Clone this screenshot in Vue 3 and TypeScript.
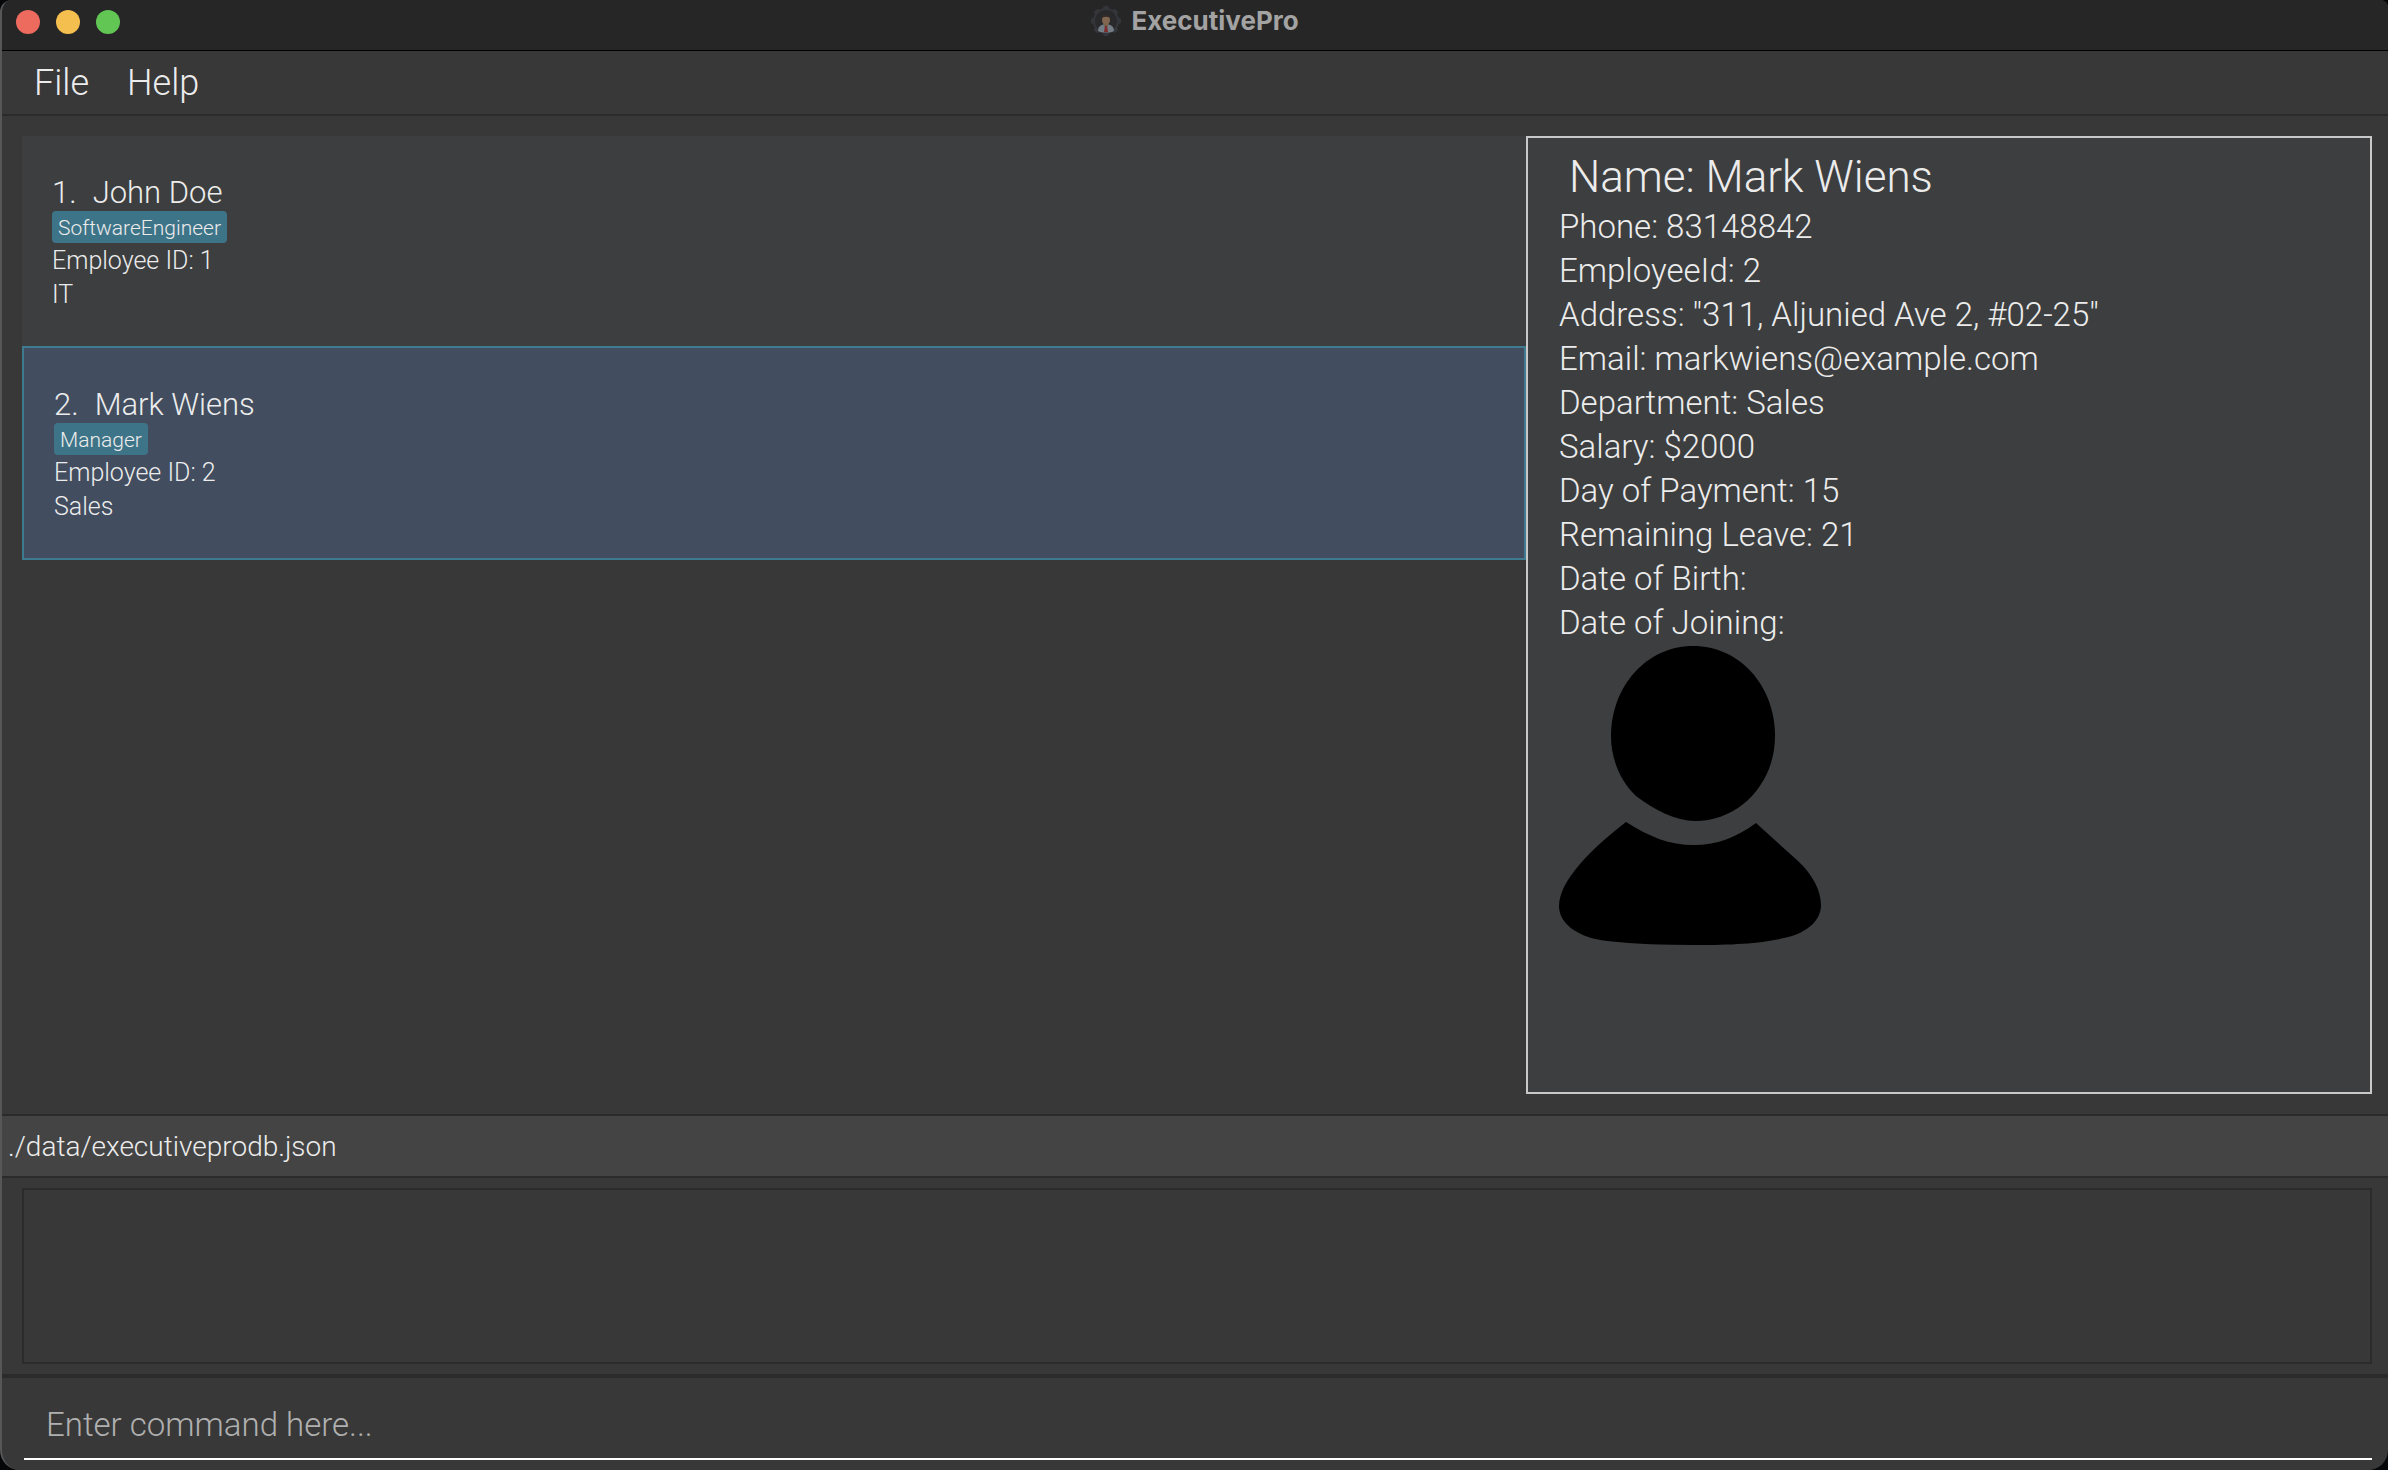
<script setup lang="ts">
import { ref } from 'vue'

interface Employee {
  id: number
  name: string
  tag: string
  department: string
}

const employees: Employee[] = [
  { id: 1, name: 'John Doe', tag: 'SoftwareEngineer', department: 'IT' },
  { id: 2, name: 'Mark Wiens', tag: 'Manager', department: 'Sales' },
]

const details: string[] = [
  'Phone: 83148842',
  'EmployeeId: 2',
  'Address: "311, Aljunied Ave 2, #02-25"',
  'Email: markwiens@example.com',
  'Department: Sales',
  'Salary: $2000',
  'Day of Payment: 15',
  'Remaining Leave: 21',
  'Date of Birth:',
  'Date of Joining:',
]

const selectedId = ref(2)
const command = ref('')
const result = ref('')
const teeth = [0, 45, 90, 135, 180, 225, 270, 315]
</script>

<template>
  <div class="window">
    <header class="titlebar">
      <div class="lights">
        <button class="light close" type="button" aria-label="Close"></button>
        <button class="light minimise" type="button" aria-label="Minimise"></button>
        <button class="light zoom" type="button" aria-label="Zoom"></button>
      </div>
      <div class="title">
        <svg class="logo" viewBox="0 0 30 30" aria-hidden="true">
          <g fill="#35363b">
            <rect v-for="a in teeth" :key="a" x="12" y="0" width="6" height="6" rx="2" :transform="`rotate(${a} 15 15)`" />
            <circle cx="15" cy="15" r="13" />
          </g>
          <circle cx="15" cy="15" r="11" fill="#29292b" />
          <path d="M7 25c0-5 4-7 8-7s8 2 8 7c-4 2-12 2-16 0z" fill="#737d85" />
          <path d="M13 17h4v3l-2 2-2-2z" fill="#78604c" />
          <ellipse cx="15" cy="14" rx="4" ry="5" fill="#806650" />
          <path d="M10 13c-1-7 11-7 10 0-1-3-9-3-10 0z" fill="#30292a" />
          <path d="M14 20h2l1 6h-4z" fill="#7d2b2b" />
        </svg>
        <h1>ExecutivePro</h1>
      </div>
    </header>

    <nav class="menubar">
      <button type="button">File</button>
      <button type="button">Help</button>
    </nav>

    <main class="content">
      <ul class="list">
        <li
          v-for="e in employees"
          :key="e.id"
          class="card"
          :class="{ selected: e.id === selectedId }"
          @click="selectedId = e.id"
        >
          <h2><span>{{ e.id }}.</span><span>{{ e.name }}</span></h2>
          <span class="tag">{{ e.tag }}</span>
          <p>Employee ID: {{ e.id }}</p>
          <p>{{ e.department }}</p>
        </li>
      </ul>

      <section class="detail">
        <h2>Name: Mark Wiens</h2>
        <p v-for="d in details" :key="d">{{ d }}</p>
        <svg class="avatar" viewBox="0 0 262 300" role="img" aria-label="Profile picture">
          <path d="M134 1C181 1 216 41 216 91C216 139 180 176 136 176C117 176 95 165 77 151C62 137 52 115 52 91C52 41 88 1 134 1Z" />
          <path d="M67 177C91 192 110 200 135 200C159 200 178 192 197 178L239 216C254 230 262 246 262 260C262 276 248 286 233 291C208 298 180 300 135 300C105 300 77 299 48 296C20 293 0 279 0 261C0 249 7 235 21 219C33 205 49 191 67 177Z" />
        </svg>
      </section>
    </main>

    <p class="status">./data/executiveprodb.json</p>

    <div class="result">
      <textarea v-model="result" readonly aria-label="Command result"></textarea>
    </div>

    <form class="command" @submit.prevent>
      <input v-model="command" type="text" placeholder="Enter command here..." aria-label="Command" />
    </form>
  </div>
</template>

<style>
body {
  margin: 0;
  background: #060708;
}
</style>

<style scoped>
* {
  box-sizing: border-box;
}
.window {
  display: flex;
  flex-direction: column;
  min-height: 100vh;
  overflow: hidden;
  border-left: 2px solid #575757;
  border-radius: 12px 8px 20px 20px;
  background: #383838;
  color: #ececec;
  font-family: Roboto, "Liberation Sans", sans-serif;
  font-weight: 350;
}
h1,
h2,
p,
ul {
  margin: 0;
  padding: 0;
  font-weight: inherit;
}
button {
  padding: 0;
  border: 0;
  background: none;
  color: inherit;
  font: inherit;
}
.titlebar {
  display: grid;
  grid-template-columns: 1fr auto 1fr;
  align-items: start;
  height: 51px;
  border-bottom: 1px solid #000;
  background: #262626;
}
.lights {
  display: flex;
  gap: 16px;
  padding: 10px 14px;
}
.light {
  width: 24px;
  height: 24px;
  border-radius: 50%;
}
.close {
  background: #ed6a5f;
}
.minimise {
  background: #f5bf4f;
}
.zoom {
  background: #62c655;
}
.title {
  display: flex;
  align-items: center;
  gap: 10px;
  height: 41px;
}
.logo {
  width: 30px;
  height: 30px;
}
.title h1 {
  color: #a3a3a3;
  font-family: Inter, "Liberation Sans", sans-serif;
  font-size: 26px;
  font-weight: 700;
}
.menubar {
  display: flex;
  gap: 38px;
  padding: 2px 32px 0;
  border-bottom: 2px solid #2b2b2b;
  font-size: 36px;
  line-height: 61px;
}
.content {
  display: grid;
  grid-template-columns: minmax(0, 64fr) minmax(0, 36fr);
  flex: 1;
  padding: 20px 16px 20px 20px;
}
.list {
  list-style: none;
}
.card {
  display: flex;
  flex-direction: column;
  align-items: flex-start;
  padding: 38px 30px 34px;
  background: #3c3e3f;
  font-size: 25px;
  line-height: 34px;
}
.card.selected {
  border: 2px solid #3e7b91;
  background: #424d5f;
}
.card h2 {
  display: flex;
  gap: 16px;
  font-size: 31px;
  line-height: 37px;
}
.tag {
  margin-bottom: 1px;
  padding: 2px 6px 0;
  border-radius: 4px;
  background: #3e7488;
  font-size: 21px;
  line-height: 30px;
}
.detail {
  padding: 12px 31px;
  border: 2px solid #c8c8c8;
  background: #3c3e3f;
  font-size: 33px;
  line-height: 44px;
}
.detail h2 {
  padding: 0 10px;
  font-size: 44px;
  line-height: 55px;
}
.avatar {
  display: block;
  width: 262px;
  height: 300px;
  fill: #000;
}
.status {
  padding: 2px 6px 0;
  border-top: 2px solid #2b2b2b;
  border-bottom: 2px solid #2b2b2b;
  background: #444;
  font-size: 28px;
  line-height: 58px;
}
.result {
  padding: 10px 16px 10px 20px;
}
.result textarea {
  display: block;
  width: 100%;
  height: 176px;
  border: 2px solid #2b2b2b;
  background: transparent;
  color: inherit;
  font: inherit;
  outline: 0;
  resize: none;
}
.command {
  padding: 10px 16px 10px 22px;
  border-top: 4px solid #2b2b2b;
}
.command input {
  display: block;
  width: 100%;
  height: 72px;
  padding: 2px 22px 0;
  border: 0;
  border-bottom: 2px solid #fff;
  background: transparent;
  color: inherit;
  font: inherit;
  font-size: 33px;
  outline: 0;
}
.command input::placeholder {
  color: #b0b0b0;
  opacity: 1;
}
</style>
